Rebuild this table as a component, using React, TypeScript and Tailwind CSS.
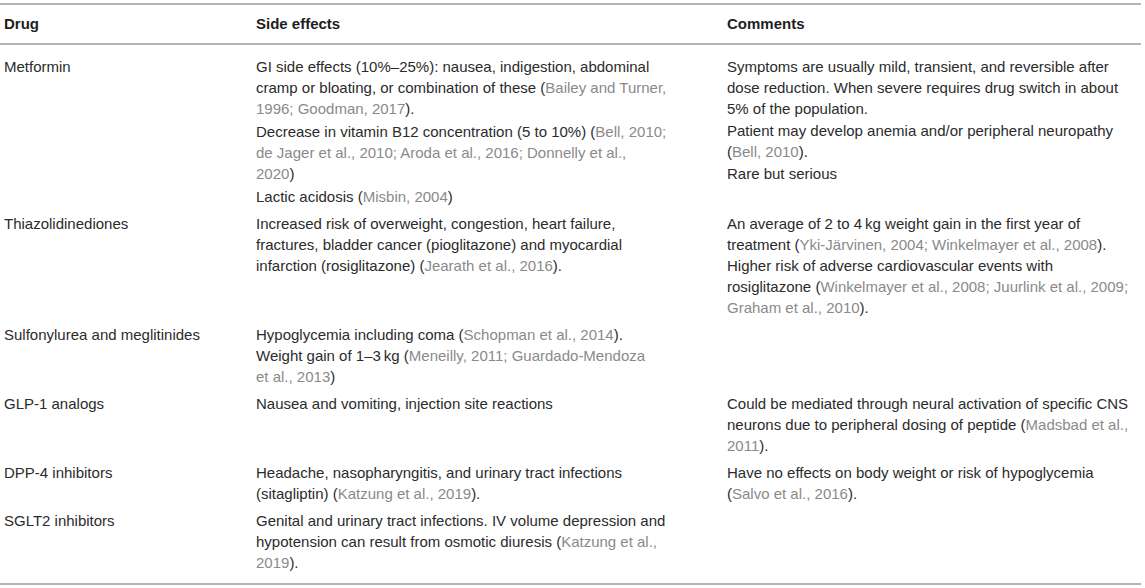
import React from "react";

type Seg = string | { c: string };
type Line = Seg[];
type Para = Line[];

const C = (c: string) => ({ c });

const gapClass: Record<string, string> = {
  "0": "flex flex-col gap-0",
  "1": "flex flex-col gap-[1px]",
  "2": "flex flex-col gap-[2px]",
};

function Cell({ paras, gap = "1" }: { paras: Para[]; gap?: string }) {
  return (
    <div className={gapClass[gap]}>
      {paras.map((p, i) => (
        <div key={i}>
          {p.map((line, j) => (
            <div key={j} className="whitespace-nowrap h-[21px] leading-[21px]">
              {line.map((s, k) =>
                typeof s === "string" ? (
                  <span key={k}>{s}</span>
                ) : (
                  <span key={k} className="text-[#8a8a8a]">
                    {s.c}
                  </span>
                )
              )}
            </div>
          ))}
        </div>
      ))}
    </div>
  );
}

const rows: { drug: string; side: Para[]; comm: Para[]; sg: string; cg: string }[] = [
  {
    drug: "Metformin",
    sg: "2",
    cg: "1",
    side: [
      [
        ["GI side effects (10%–25%): nausea, indigestion, abdominal"],
        ["cramp or bloating, or combination of these (", C("Bailey and Turner,")],
        [C("1996; Goodman, 2017"), ")."],
      ],
      [
        ["Decrease in vitamin B12 concentration (5 to 10%) (", C("Bell, 2010;")],
        [C("de Jager et al., 2010; Aroda et al., 2016; Donnelly et al.,")],
        [C("2020"), ")"],
      ],
      [["Lactic acidosis (", C("Misbin, 2004"), ")"]],
    ],
    comm: [
      [
        ["Symptoms are usually mild, transient, and reversible after"],
        ["dose reduction. When severe requires drug switch in about"],
        ["5% of the population."],
      ],
      [
        ["Patient may develop anemia and/or peripheral neuropathy"],
        ["(", C("Bell, 2010"), ")."],
      ],
      [["Rare but serious"]],
    ],
  },
  {
    drug: "Thiazolidinediones",
    sg: "0",
    cg: "0",
    side: [
      [
        ["Increased risk of overweight, congestion, heart failure,"],
        ["fractures, bladder cancer (pioglitazone) and myocardial"],
        ["infarction (rosiglitazone) (", C("Jearath et al., 2016"), ")."],
      ],
    ],
    comm: [
      [
        ["An average of 2 to 4\u2009kg weight gain in the first year of"],
        ["treatment (", C("Yki-Järvinen, 2004; Winkelmayer et al., 2008"), ")."],
      ],
      [
        ["Higher risk of adverse cardiovascular events with"],
        ["rosiglitazone (", C("Winkelmayer et al., 2008; Juurlink et al., 2009;")],
        [C("Graham et al., 2010"), ")."],
      ],
    ],
  },
  {
    drug: "Sulfonylurea and meglitinides",
    sg: "0",
    cg: "0",
    side: [
      [["Hypoglycemia including coma (", C("Schopman et al., 2014"), ")."]],
      [
        ["Weight gain of 1–3\u2009kg (", C("Meneilly, 2011; Guardado-Mendoza")],
        [C("et al., 2013"), ")"],
      ],
    ],
    comm: [],
  },
  {
    drug: "GLP-1 analogs",
    sg: "0",
    cg: "0",
    side: [[["Nausea and vomiting, injection site reactions"]]],
    comm: [
      [
        ["Could be mediated through neural activation of specific CNS"],
        ["neurons due to peripheral dosing of peptide (", C("Madsbad et al.,")],
        [C("2011"), ")."],
      ],
    ],
  },
  {
    drug: "DPP-4 inhibitors",
    sg: "0",
    cg: "0",
    side: [
      [
        ["Headache, nasopharyngitis, and urinary tract infections"],
        ["(sitagliptin) (", C("Katzung et al., 2019"), ")."],
      ],
    ],
    comm: [
      [
        ["Have no effects on body weight or risk of hypoglycemia"],
        ["(", C("Salvo et al., 2016"), ")."],
      ],
    ],
  },
  {
    drug: "SGLT2 inhibitors",
    sg: "0",
    cg: "0",
    side: [
      [
        ["Genital and urinary tract infections. IV volume depression and"],
        ["hypotension can result from osmotic diuresis (", C("Katzung et al.,")],
        [C("2019"), ")."],
      ],
    ],
    comm: [],
  },
];

export default function App() {
  return (
    <div
      className="w-[1145px] h-[588px] bg-white pt-[3px] text-[15px] text-[#2b2b2b]"
      style={{ fontFamily: '"Liberation Sans", Arial, Helvetica, sans-serif' }}
    >
      <div className="w-[1141px] border-t-2 border-b-2 border-[#b4b4b4]">
        <div className="grid grid-cols-[252px_471px_1fr] pl-[4px] pt-[8px] pb-[9px] border-b-2 border-[#b4b4b4] font-bold text-[#1e1e1e] leading-[21px]">
          <div>Drug</div>
          <div>Side effects</div>
          <div>Comments</div>
        </div>
        <div className="pt-[8px] pb-[7px]">
          {rows.map((r, i) => (
            <div key={i} className="grid grid-cols-[252px_471px_1fr] pl-[4px] py-[3px]">
              <div className="leading-[21px]">{r.drug}</div>
              <Cell paras={r.side} gap={r.sg} />
              <Cell paras={r.comm} gap={r.cg} />
            </div>
          ))}
        </div>
      </div>
    </div>
  );
}
